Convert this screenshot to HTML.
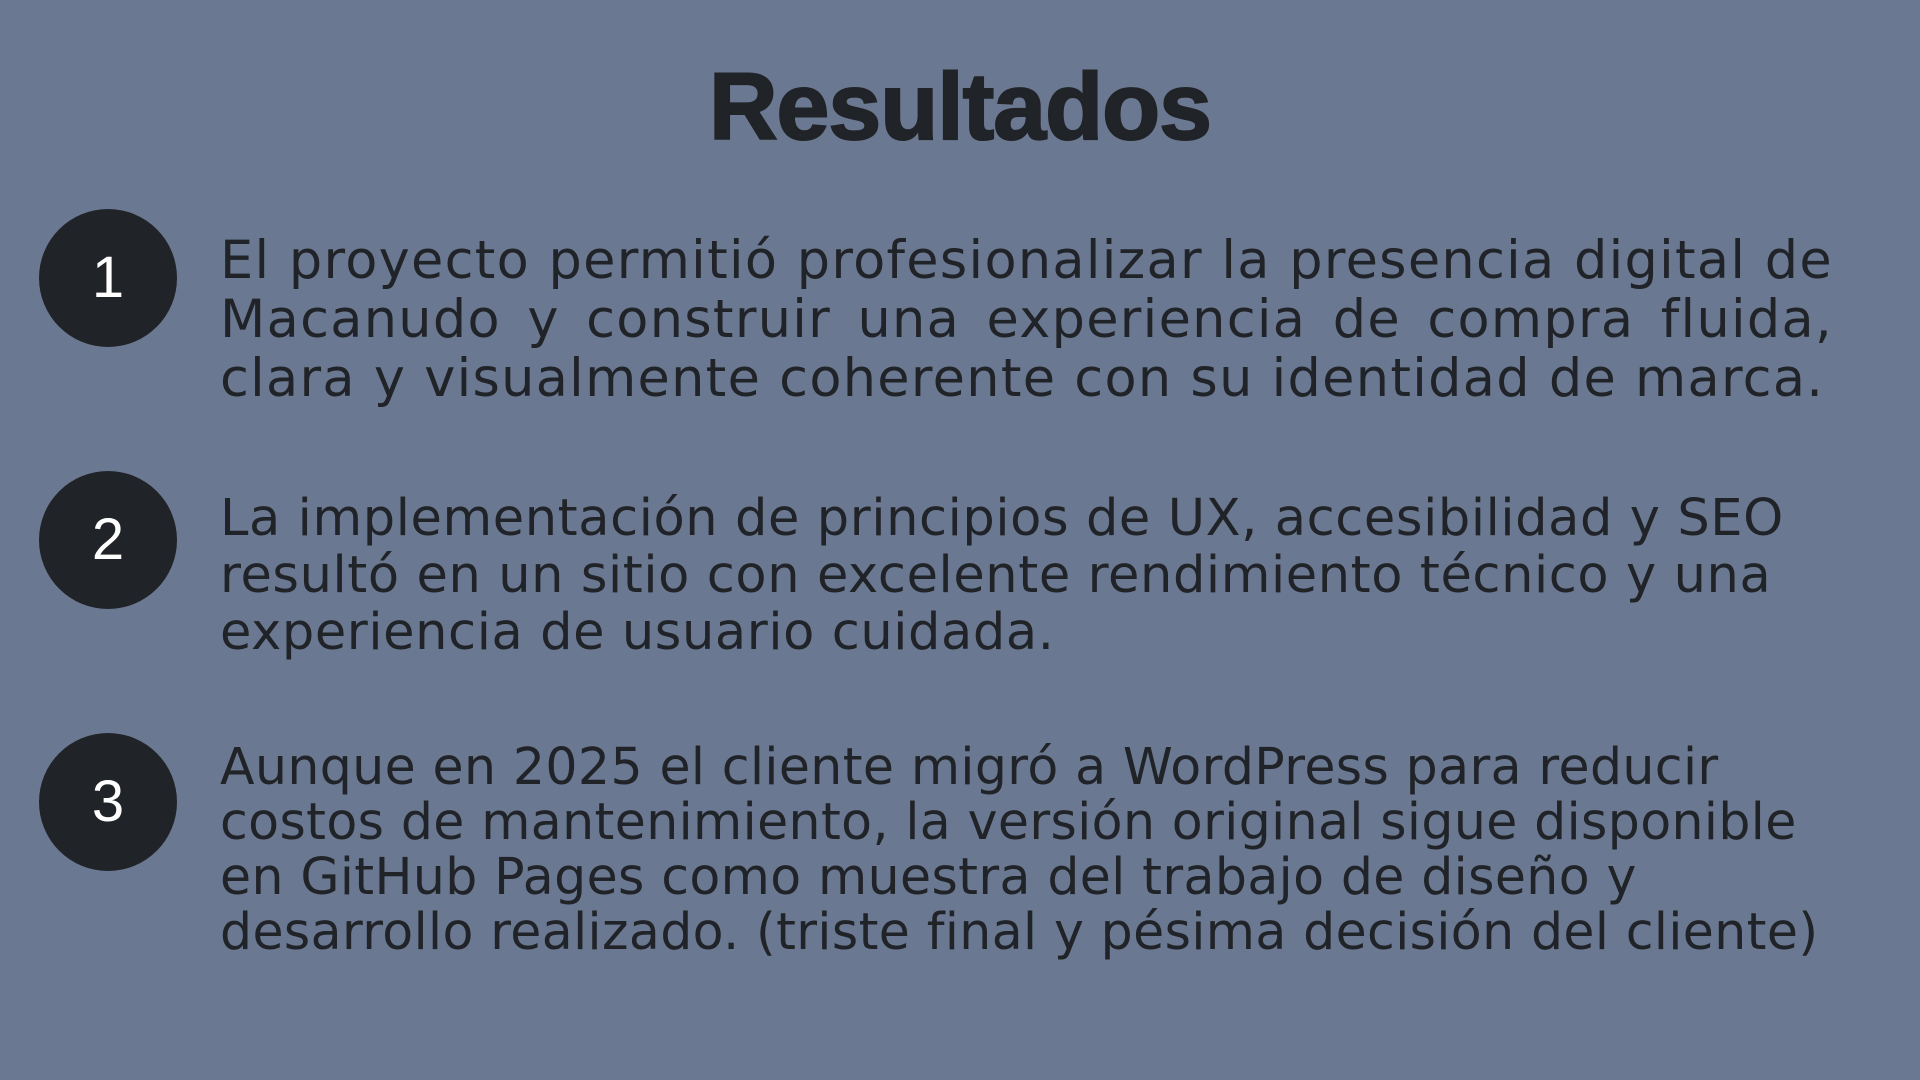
<!DOCTYPE html>
<html><head><meta charset="utf-8"><style>
html,body{margin:0;padding:0;}
body{width:1920px;height:1080px;background:#6b7891;position:relative;overflow:hidden;font-family:"DejaVu Sans",sans-serif;color:#202327;}
h1{position:absolute;left:0;width:1920px;top:52px;margin:0;text-align:center;font-family:"Liberation Sans",sans-serif;font-weight:bold;font-size:95px;letter-spacing:-1px;line-height:110px;color:#202327;-webkit-text-stroke:2px #202327;}
.c{position:absolute;left:39px;width:138px;height:138px;border-radius:50%;background:#202327;color:#fff;font-family:"Liberation Sans",sans-serif;font-size:58px;text-align:center;line-height:138px;}
.p{position:absolute;left:220px;width:1613px;font-size:51px;letter-spacing:0.6px;margin:0;white-space:nowrap;}
.j span{display:block;text-align:justify;text-align-last:justify;}
</style></head><body>
<h1>Resultados</h1>
<div class="c" style="top:209px">1</div>
<div class="c" style="top:471px">2</div>
<div class="c" style="top:733px">3</div>
<div class="p j" style="top:231px;line-height:59px;font-size:52.5px;letter-spacing:1.3px;"><span>El proyecto permitió profesionalizar la presencia digital de</span><span>Macanudo y construir una experiencia de compra fluida,</span><span style="text-align-last:left">clara y visualmente coherente con su identidad de marca.</span></div>
<div class="p" style="top:490px;line-height:57px;">La implementación de principios de UX, accesibilidad y SEO<br>resultó en un sitio con excelente rendimiento técnico y una<br>experiencia de usuario cuidada.</div>
<div class="p" style="top:739px;line-height:55px;font-size:50.5px;letter-spacing:0.4px;">Aunque en 2025 el cliente migró a WordPress para reducir<br>costos de mantenimiento, la versión original sigue disponible<br>en GitHub Pages como muestra del trabajo de diseño y<br>desarrollo realizado. (triste final y pésima decisión del cliente)</div>
</body></html>
